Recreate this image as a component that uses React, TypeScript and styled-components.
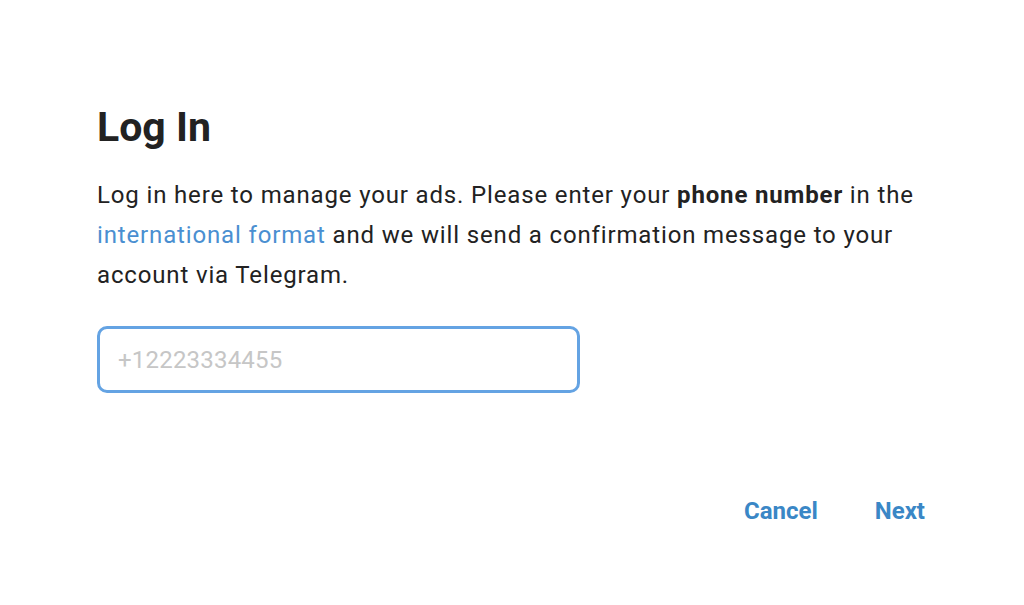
import * as React from "react";
import styled, { createGlobalStyle } from "styled-components";

const GlobalStyle = createGlobalStyle`
    html, body {
        margin: 0;
        padding: 0;
        background: #fff;
    }
    body {
        font-family: Roboto, "Liberation Sans", Arial, sans-serif;
        color: #222;
    }
`

const Page = styled.div`
    padding: 103px 0 0 97px;
`

const Box = styled.section`
    display: flex;
    flex-direction: column;
    width: 828px;
`

const Title = styled.h1`
    margin: 0;
    font-size: 41px;
    line-height: 48px;
    font-weight: 700;
    color: #222;
`

const Text = styled.p`
    margin: 24px 0 0;
    font-size: 24px;
    line-height: 40px;
    letter-spacing: 0.85px;
    color: #222;

    b {
        font-weight: 700;
    }
`

const Link = styled.a`
    color: #4a8fd1;
    text-decoration: none;
`

const PhoneInput = styled.input`
    box-sizing: border-box;
    margin-top: 31px;
    width: 483px;
    height: 67px;
    padding: 0 18px;
    border: 3px solid #64a3e3;
    border-radius: 10px;
    outline: none;
    font-family: inherit;
    font-size: 24px;
    letter-spacing: 0.2px;
    color: #222;

    &::placeholder {
        color: #c6c6c6;
    }
`

const Actions = styled.div`
    display: flex;
    justify-content: flex-end;
    gap: 57px;
    margin-top: 98px;
`

const Button = styled.button`
    padding: 0;
    border: 0;
    background: none;
    font-family: inherit;
    font-size: 24px;
    line-height: 40px;
    font-weight: 700;
    color: #3a87c6;
    cursor: pointer;
`

export default function App() {
    const [phone, setPhone] = React.useState("");
    return (
        <Page>
            <GlobalStyle />
            <Box>
                <Title>Log In</Title>
                <Text>
                    Log in here to manage your ads. Please enter your <b>phone number</b> in the{" "}
                    <Link href="#">international format</Link> and we will send a confirmation message to your
                    account via Telegram.
                </Text>
                <PhoneInput
                    value={phone}
                    placeholder="+12223334455"
                    onChange={(e) => setPhone(e.target.value)}
                />
                <Actions>
                    <Button>Cancel</Button>
                    <Button>Next</Button>
                </Actions>
            </Box>
        </Page>
    );
}
